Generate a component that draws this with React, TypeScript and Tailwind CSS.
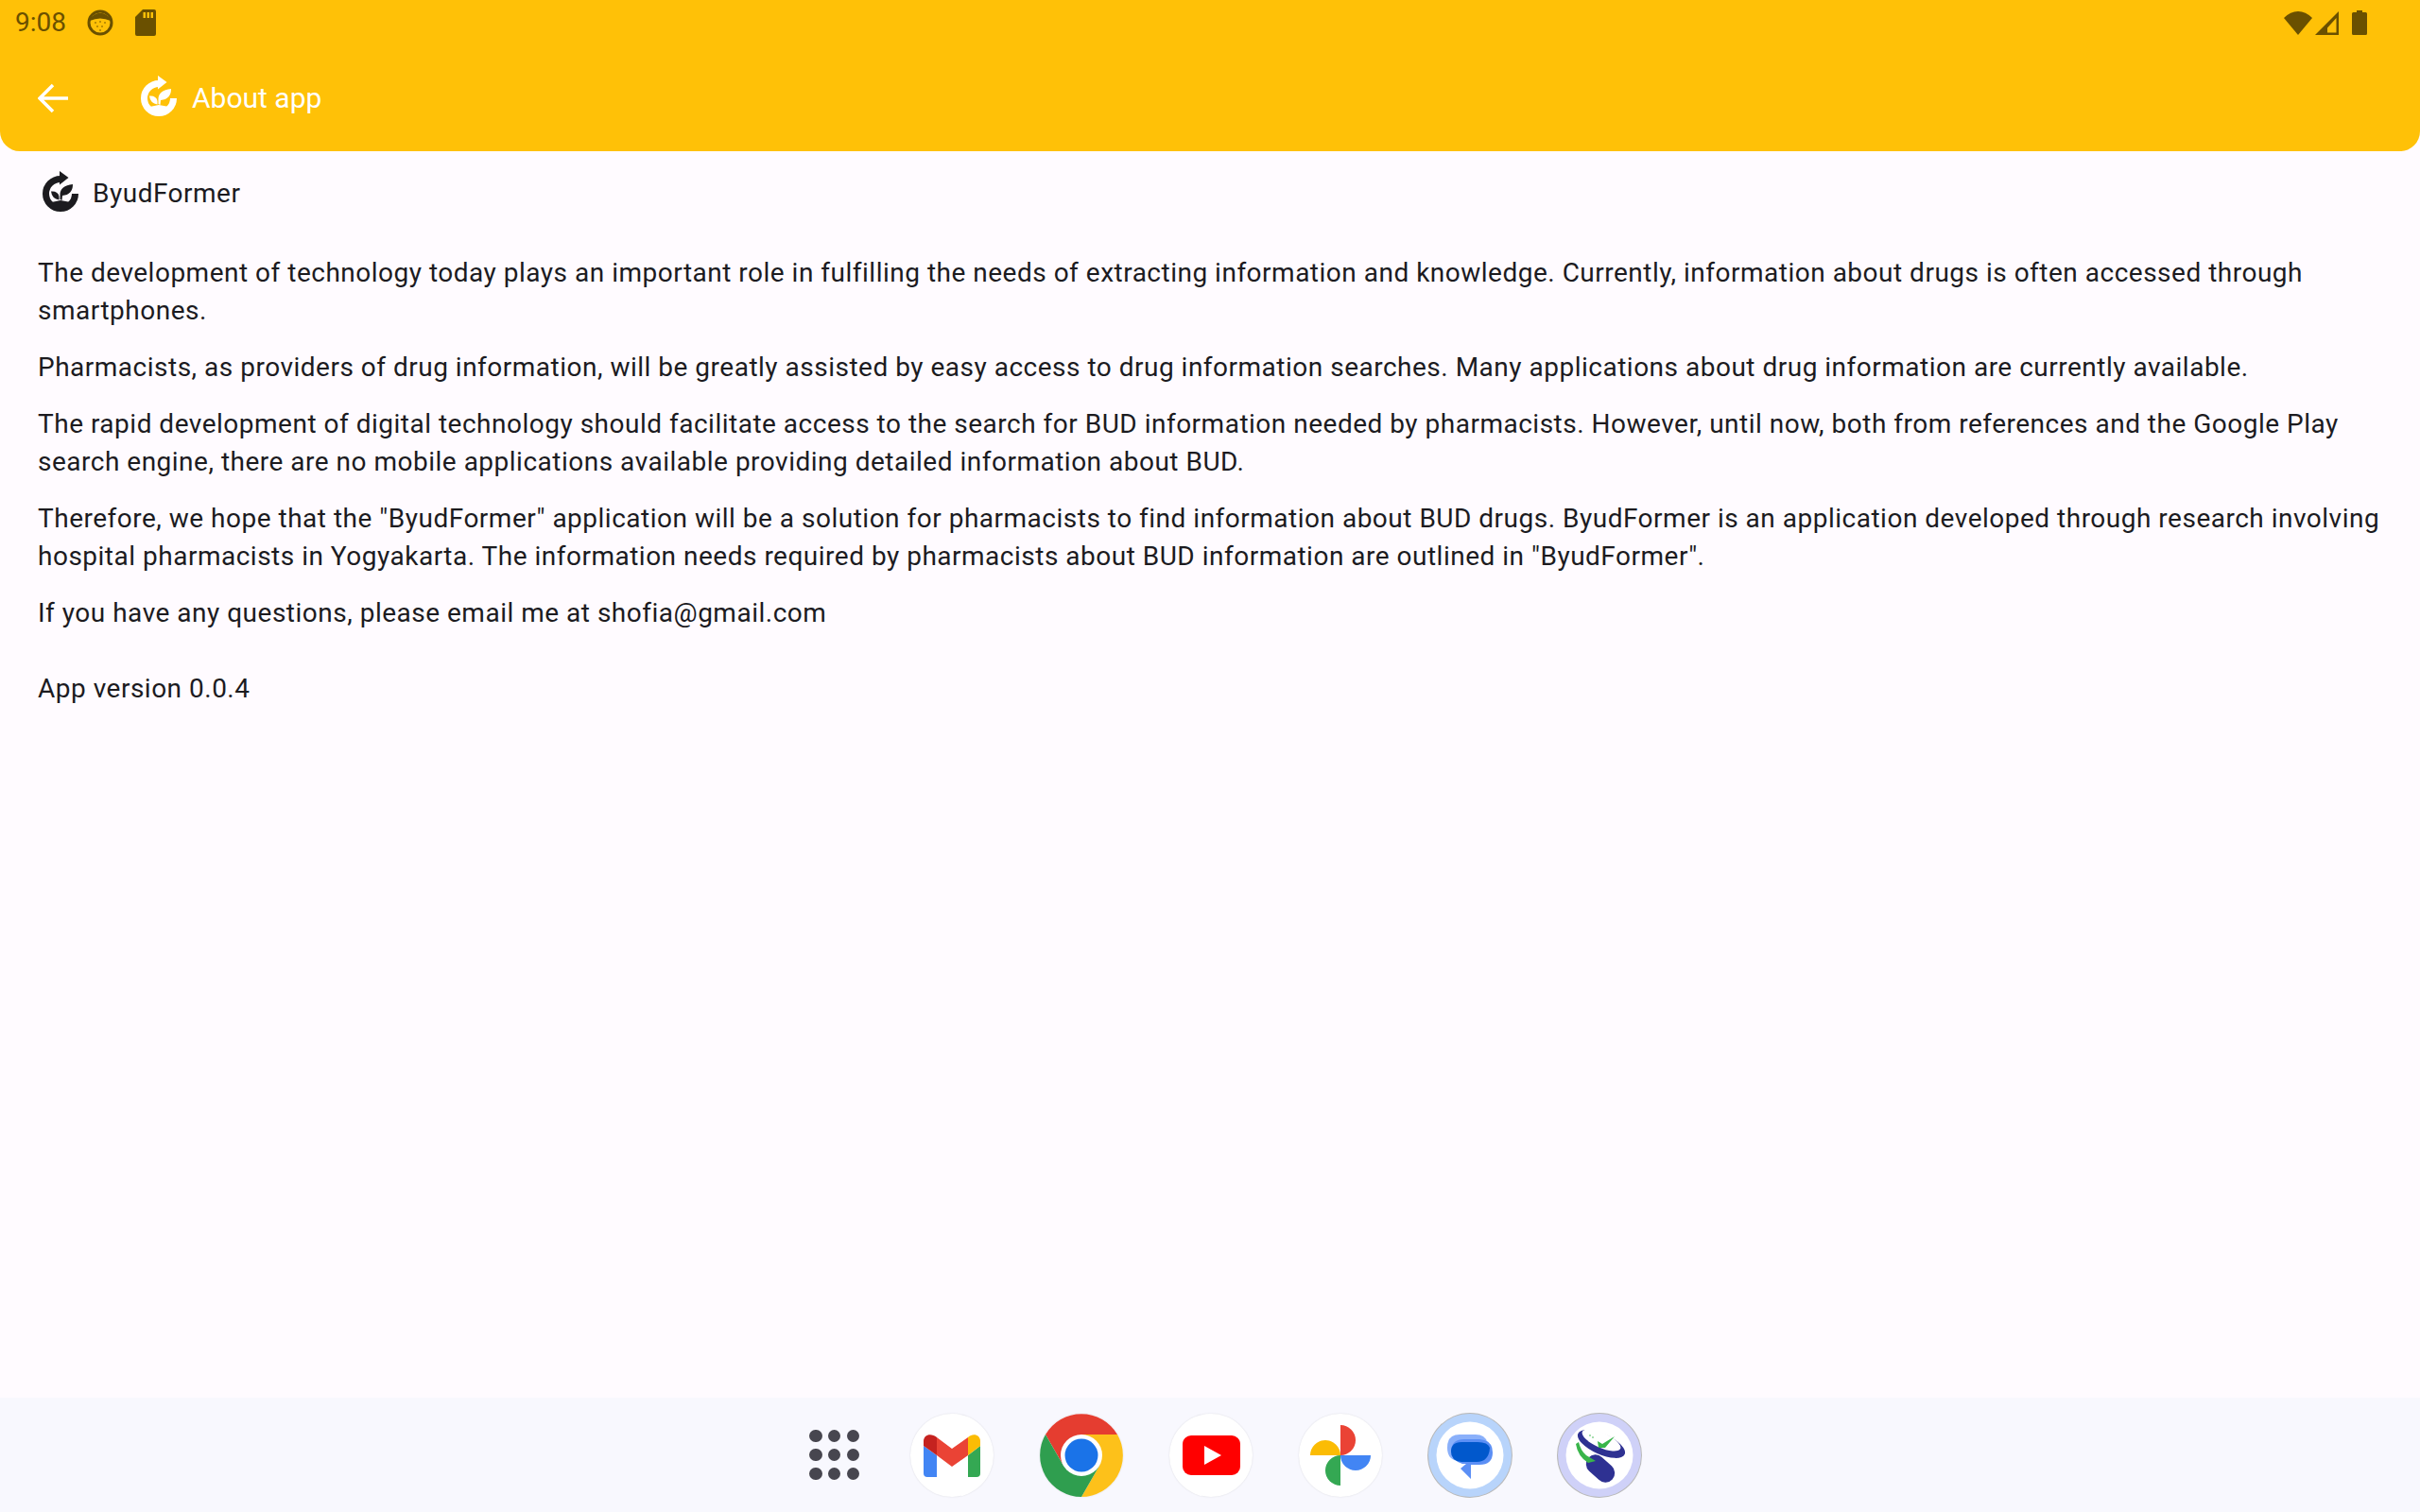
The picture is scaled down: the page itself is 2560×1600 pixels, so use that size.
const Logo = ({ className }: { className: string }) => (
  <svg viewBox="0 0 38 43" className={className} fill="currentColor">
    <path d="M19 8.500A15.500 15.500 0 1 0 34.500 24" fill="none" stroke="currentColor" strokeWidth="7" />
    <path d="M18 0 L27.500 7 L18 14.500 Z" />
    <path d="M7 34 Q13 32 19 31 Q26 32 32 34 L28 40 L10 40 Z" />
    <path d="M18.500 30 L18.500 25 Q18.500 15.500 32 14 Q32 25 21 26 L20.500 31 Z" />
    <path d="M17.500 30.500 Q10 29.500 9 21.500 Q16.500 21 17.500 27 Z" />
  </svg>
);

const Circle = ({ children }: { children: React.ReactNode }) => (
  <div className="w-[88px] h-[88px] rounded-full bg-white shadow-[0_0_2px_rgba(0,0,0,0.12)] shrink-0">
    <svg viewBox="0 0 88 88" className="w-full h-full">{children}</svg>
  </div>
);

const Apps = () => (
  <div className="grid grid-cols-3 gap-[6.500px] w-[53px] shrink-0">
    {[0, 1, 2, 3, 4, 5, 6, 7, 8].map((i) => (
      <div key={i} className="w-[13.500px] h-[13.500px] rounded-full bg-[#47464f]" />
    ))}
  </div>
);

const paragraphs = [
  'The development of technology today plays an important role in fulfilling the needs of extracting information and knowledge. Currently, information about drugs is often accessed through smartphones.',
  'Pharmacists, as providers of drug information, will be greatly assisted by easy access to drug information searches. Many applications about drug information are currently available.',
  'The rapid development of digital technology should facilitate access to the search for BUD information needed by pharmacists. However, until now, both from references and the Google Play search engine, there are no mobile applications available providing detailed information about BUD.',
  'Therefore, we hope that the "ByudFormer" application will be a solution for pharmacists to find information about BUD drugs. ByudFormer is an application developed through research involving hospital pharmacists in Yogyakarta. The information needs required by pharmacists about BUD information are outlined in "ByudFormer".',
  'If you have any questions, please email me at shofia@gmail.com',
];

export default function App() {
  return (
    <div className="w-[2560px] h-[1600px] flex flex-col overflow-hidden bg-[#fffbff] text-[#1c1b1f] font-['Roboto',sans-serif]">
      <header className="h-[160px] bg-[#ffc107] rounded-b-[21px] flex flex-col shrink-0">
        <div className="h-[48px] flex items-center justify-between text-[#6a5000]">
          <div className="flex items-center pl-[16px]">
            <span className="text-[28px] leading-[48px] w-[76px]">9:08</span>
            <svg viewBox="0 0 28 28" className="w-[28px] h-[28px]">
              <circle cx="14" cy="14" r="12" fill="none" stroke="currentColor" strokeWidth="3" />
              <path d="M3 12 A11.500 11.500 0 0 1 25 12 Q14 7 3 12 Z" fill="currentColor" />
              <g fill="currentColor">
                <circle cx="9" cy="14" r="0.800" /><circle cx="14" cy="13" r="0.800" /><circle cx="19" cy="14" r="0.800" />
                <circle cx="11" cy="18" r="0.800" /><circle cx="16" cy="18" r="0.800" /><circle cx="14" cy="22" r="0.800" />
              </g>
            </svg>
            <svg viewBox="0 0 22 28" className="w-[22px] h-[28px] ml-[23px]">
              <path fillRule="evenodd" fill="currentColor" d="M8 0H20Q22 0 22 2V26Q22 28 20 28H2Q0 28 0 26V8ZM8.500 3V9H11V3ZM12.500 3V9H15V3ZM16.500 3V9H19V3Z" />
            </svg>
          </div>
          <div className="flex items-center pr-[56px]">
            <svg viewBox="0 0 30 25" className="w-[30px] h-[25px]">
              <path fill="currentColor" d="M15 25L0 7Q7 0 15 0T30 7Z" />
            </svg>
            <svg viewBox="0 0 25 25" className="w-[25px] h-[25px] ml-[3px]">
              <path fillRule="evenodd" fill="currentColor" d="M25 0V25H0ZM22.500 7L13 17.500V22.500H22.500Z" />
            </svg>
            <svg viewBox="0 0 16 26" className="w-[16px] h-[26px] ml-[14px]">
              <path fill="currentColor" d="M5 0H11V2H14.500Q16 2 16 3.500V24.500Q16 26 14.500 26H1.500Q0 26 0 24.500V3.500Q0 2 1.500 2H5Z" />
            </svg>
          </div>
        </div>
        <div className="flex-1 flex items-center text-white pl-[40px]">
          <svg viewBox="0 0 32 32" className="w-[32px] h-[32px]" fill="none" stroke="currentColor" strokeWidth="3.500">
            <path d="M32 16H3M16 2L2 16L16 30" />
          </svg>
          <Logo className="w-[38px] h-[43px] ml-[77px] mb-[5px] text-white" />
          <span className="ml-[16px] text-[30px] leading-[40px]">About app</span>
        </div>
      </header>

      <main className="flex-1 px-[40px]">
        <div className="flex items-center h-[90px] pl-[5px]">
          <Logo className="w-[38px] h-[43px] mb-[5px] text-[#1c1b1f]" />
          <span className="ml-[15px] text-[28px] leading-[40px] tracking-[0.5px]">ByudFormer</span>
        </div>
        <div className="flex flex-col gap-[20px] pt-[19px] text-[28px] leading-[40px] tracking-[0.5px]">
          {paragraphs.map((p) => (
            <p key={p}>{p}</p>
          ))}
        </div>
        <p className="mt-[40px] text-[28px] leading-[40px] tracking-[0.5px]">App version 0.0.4</p>
      </main>

      <nav className="h-[121px] bg-[#f8f8fe] shrink-0 flex items-center justify-center pl-[32px] gap-[54px]">
        <Apps />
        <div className="flex gap-[49px] items-center">
          <Circle>
            <path fill="#4285f4" d="M14 34L28 44V67H18Q14 67 14 63Z" />
            <path fill="#34a853" d="M61 44L74 34V63Q74 67 70 67H61Z" />
            <path fill="#ea4335" d="M28 25L44 37L61 25V44L44 56L28 44Z" />
            <path fill="#c5221f" d="M14 29C14 22 22 20 28 25V44L14 34Z" />
            <path fill="#fbbc04" d="M61 25C66 20 74 22 74 29V34L61 44Z" />
          </Circle>
          <Circle>
            <path fill="#e53d30" d="M6 22A44 44 0 0 1 82 22L44 22L25 55Z" />
            <path fill="#fdc11a" d="M82 22A44 44 0 0 1 44 88L63 55L44 22Z" />
            <path fill="#2f9e4f" d="M44 88A44 44 0 0 1 6 22L25 55L63 55Z" />
            <circle cx="44" cy="44" r="22" fill="#fff" />
            <circle cx="44" cy="44" r="17.500" fill="#1a73e8" />
          </Circle>
          <Circle>
            <rect x="14" y="23" width="61" height="42" rx="9" fill="#ff0000" />
            <path fill="#fff" d="M37 34L55 44L37 54Z" />
          </Circle>
          <Circle>
            <path fill="#ea4335" d="M44 44V12A16 16 0 0 1 44 44Z" />
            <path fill="#fbbc04" d="M44 44H12A16 16 0 0 1 44 44Z" />
            <path fill="#4285f4" d="M44 44H76A16 16 0 0 1 44 44Z" />
            <path fill="#34a853" d="M44 44V76A16 16 0 0 1 44 44Z" />
          </Circle>
          <svg viewBox="0 0 90 90" className="w-[90px] h-[90px] -mx-[1px] shrink-0">
            <circle cx="45" cy="45" r="45" fill="#b9b9b9" />
            <circle cx="45" cy="45" r="44" fill="#b8d4fb" />
            <circle cx="45" cy="45" r="35.500" fill="#fff" />
            <path fill="#8ab0fa" d="M34 23H51Q64 23 64 37Q64 51 50 51H35Q21 51 21 37Q21 23 34 23Z" />
            <path fill="#5b8ff5" d="M39 28H55Q69 29 69 42Q69 55 55 55H46V70L35 59L41 54H37Q25 50 25 41Q25 28 39 28Z" />
            <path fill="#0158cc" d="M36 31H53Q64 31 66 37Q65 52 52 52H36Q25 51 25 41Q25 31 36 31Z" />
          </svg>
          <svg viewBox="0 0 90 90" className="w-[90px] h-[90px] -mx-[1px] shrink-0">
            <circle cx="45" cy="45" r="45" fill="#b9b9b9" />
            <circle cx="45" cy="45" r="44" fill="#cfd1f8" />
            <circle cx="45" cy="45" r="35.500" fill="#fff" />
            <rect x="29" y="49" width="34" height="20" rx="10" transform="rotate(42 46 59)" fill="#2e3192" />
            <path fill="#39b54a" d="M20 33L23 31Q25 40 31 45L41 51L33 53Q22 46 20 33Z" />
            <ellipse cx="47" cy="33" rx="27" ry="11" transform="rotate(24 47 33)" fill="#2e3192" />
            <ellipse cx="47" cy="29" rx="22" ry="8" transform="rotate(24 47 29)" fill="#fff" />
            <path fill="#39b54a" d="M43 30L48 33L61 25L51 37H44Z" />
            <g fill="#39b54a"><circle cx="35" cy="24" r="0.800" /><circle cx="38" cy="26" r="0.800" /></g>
          </svg>
        </div>
      </nav>
    </div>
  );
}
